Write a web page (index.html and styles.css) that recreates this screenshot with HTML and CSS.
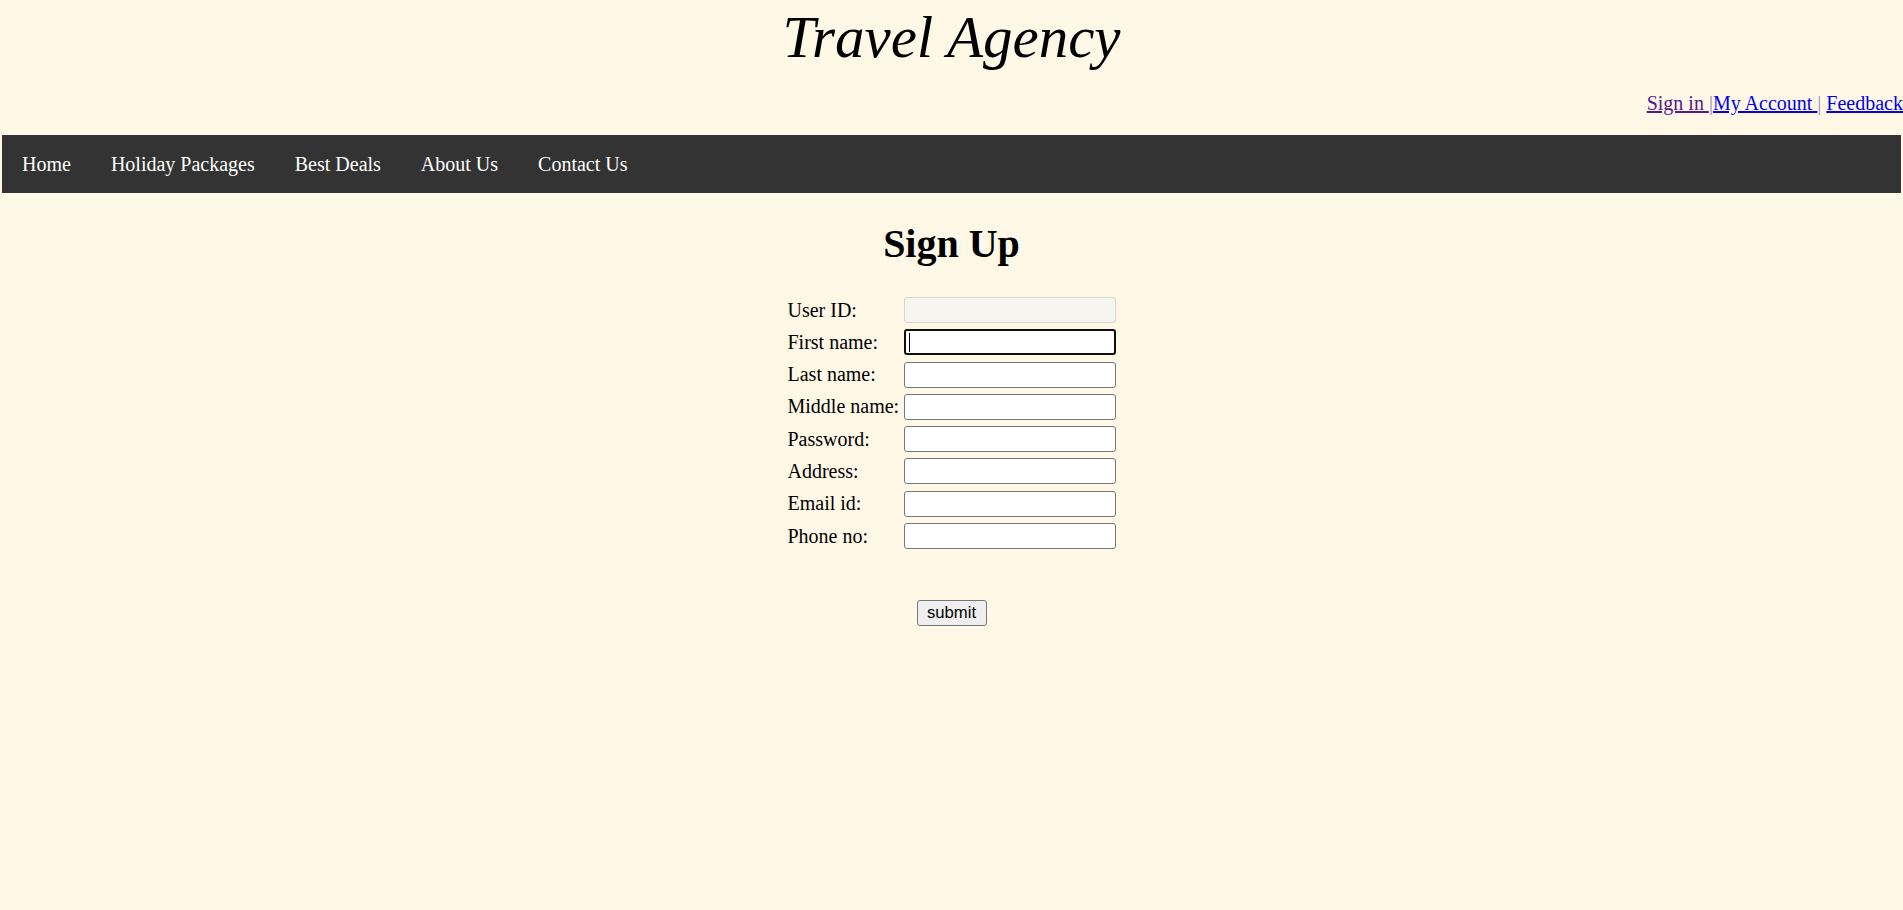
FILE: index.html
```html
<!DOCTYPE html>
<html lang="en">
<head>
<meta charset="utf-8">
<title>Travel Agency - Sign Up</title>
<link rel="stylesheet" href="styles.css">
</head>
<body>
<header class="masthead">
  <div class="brand">Travel Agency</div>
  <div class="toplinks"><a class="visited" href="#">Sign in </a><span class="sep sep-v">|</span><a href="#">My Account </a><span class="sep sep-b">|</span> <a href="#">Feedback</a></div>
</header>
<nav class="menu">
  <a href="#">Home</a>
  <a href="#">Holiday Packages</a>
  <a href="#">Best Deals</a>
  <a href="#">About Us</a>
  <a href="#">Contact Us</a>
</nav>
<main class="content">
  <h1 class="title">Sign Up</h1>
  <form class="signup">
    <div class="grid">
      <label class="lbl">User ID:</label>
      <input class="field field-disabled" type="text" disabled>
      <label class="lbl">First name:</label>
      <span class="focus-wrap"><input class="field field-focus" type="text"><span class="caret"></span></span>
      <label class="lbl">Last name:</label>
      <input class="field" type="text">
      <label class="lbl">Middle name:</label>
      <input class="field" type="text">
      <label class="lbl">Password:</label>
      <input class="field" type="password">
      <label class="lbl">Address:</label>
      <input class="field" type="text">
      <label class="lbl">Email id:</label>
      <input class="field" type="text">
      <label class="lbl">Phone no:</label>
      <input class="field" type="text">
    </div>
    <div class="actions">
      <button class="submit" type="button">submit</button>
    </div>
  </form>
</main>
</body>
</html>
```
FILE: styles.css
```css
html, body {
  margin: 0;
  padding: 0;
}
body {
  background: #fff8e7;
  font-family: "Liberation Serif", "Times New Roman", serif;
  font-size: 20px;
  color: #000;
}
.masthead {
  display: flex;
  flex-direction: column;
}
.brand {
  text-align: center;
  font-style: italic;
  font-size: 59px;
  line-height: 70px;
  margin-top: 2px;
  height: 70px;
}
.toplinks {
  text-align: right;
  line-height: 23px;
  margin-top: 20px;
  white-space: pre;
}
.toplinks a {
  color: #0000ee;
}
.toplinks a.visited {
  color: #551a8b;
}
.sep-v {
  color: #9486a8;
}
.sep-b {
  color: #7f8ad0;
}
.menu {
  display: flex;
  margin: 20px 2px 0 2px;
  background: #333333;
  height: 58px;
  box-sizing: border-box;
}
.menu a {
  color: #fff;
  text-decoration: none;
  line-height: 23px;
  padding: 18px 20px 17px 20px;
}
.content {
  display: flex;
  flex-direction: column;
  align-items: center;
}
.title {
  font-size: 40px;
  font-weight: bold;
  line-height: 46px;
  margin: 28px 0 0 0;
  text-align: center;
}
.signup {
  margin-top: 30px;
  display: flex;
  flex-direction: column;
  align-items: center;
}
.grid {
  display: grid;
  grid-template-columns: 116px 212px;
  grid-auto-rows: 26px;
  row-gap: 6.3px;
  align-items: center;
}
.lbl {
  line-height: 23px;
  white-space: nowrap;
}
.field {
  width: 212px;
  height: 26px;
  box-sizing: border-box;
  border: 1px solid #767676;
  border-radius: 3px;
  background: #fff;
  margin: 0;
  padding: 1px 3px;
  font-family: "Liberation Sans", Arial, sans-serif;
  font-size: 16px;
  outline: none;
}
.field-disabled {
  background: #f7f5f0;
  border-color: #d8d5cc;
}
.focus-wrap {
  position: relative;
  display: block;
  height: 26px;
}
.field-focus {
  border: 2px solid #101010;
  border-radius: 3px;
}
.caret {
  position: absolute;
  left: 5px;
  top: 4px;
  width: 1px;
  height: 19px;
  background: #000;
}
.actions {
  margin-top: 51px;
}
.submit {
  width: 70px;
  height: 26px;
  box-sizing: border-box;
  border: 1px solid #767676;
  border-radius: 3px;
  background: #efefef;
  font-family: "Liberation Sans", Arial, sans-serif;
  font-size: 16.7px;
  color: #000;
  padding: 0;
  margin: 0;
}
```
